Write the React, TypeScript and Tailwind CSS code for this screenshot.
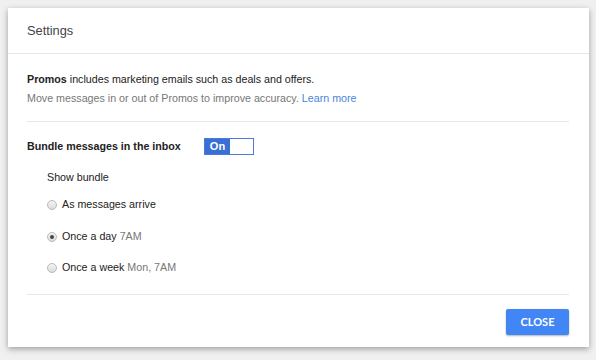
import React from "react";

function Radio({ checked }: { checked?: boolean }) {
  return (
    <span className="relative flex h-[10px] w-[10px] shrink-0 items-center justify-center rounded-full border border-[#b9b9b9] bg-gradient-to-b from-[#f4f4f4] to-[#dcdcdc]">
      {checked && <span className="h-[4px] w-[4px] rounded-full bg-[#444]" />}
    </span>
  );
}

export default function App() {
  return (
    <div className="h-[360px] w-[596px] bg-[#f0f0f0] pl-[8px] pt-[8px]" style={{ fontFamily: '"Liberation Sans", Arial, sans-serif' }}>
      <div className="flex h-[339px] w-[581px] flex-col bg-white shadow-[0_2px_6px_rgba(0,0,0,0.35)]">
        <div className="flex h-[46px] shrink-0 items-center border-b border-[#e6e6e6] px-[19px] pt-[1px] text-[12.8px] text-[#444]">
          Settings
        </div>
        <div className="flex flex-1 flex-col pl-[19px] pr-[20px]">
          <div className="mt-[16px] text-[10.7px] leading-[19px] text-[#222]">
            <div>
              <span className="font-bold">Promos</span> includes marketing emails such as deals and offers.
            </div>
            <div className="text-[#777]">
              Move messages in or out of Promos to improve accuracy.{" "}
              <span className="text-[#4a86d8]">Learn more</span>
            </div>
          </div>
          <div className="mt-[13px] h-px bg-[#e6e6e6]" />
          <div className="mt-[16px] flex h-[17px] items-center">
            <span className="w-[177px] text-[10.7px] font-bold text-[#222]">Bundle messages in the inbox</span>
            <span className="flex h-[17px] w-[50px] border border-[#4a7bd8]">
              <span className="flex w-[25px] items-center justify-center bg-[#3a6fd6] text-[11px] font-bold text-white">
                On
              </span>
              <span className="flex-1 bg-white" />
            </span>
          </div>
          <div className="pl-[20px] text-[10.7px] text-[#222]">
            <div className="mt-[16px] leading-[13px]">Show bundle</div>
            <div className="mt-[14px] flex h-[13px] items-center gap-[5px]">
              <Radio />
              <span>As messages arrive</span>
            </div>
            <div className="mt-[19px] flex h-[13px] items-center gap-[5px]">
              <Radio checked />
              <span>
                Once a day <span className="text-[#777]">7AM</span>
              </span>
            </div>
            <div className="mt-[18px] flex h-[13px] items-center gap-[5px]">
              <Radio />
              <span>
                Once a week <span className="text-[#777]">Mon, 7AM</span>
              </span>
            </div>
          </div>
          <div className="mt-[20px] h-px bg-[#e6e6e6]" />
          <div className="mt-[14px] flex justify-end">
            <button
              className="flex h-[26px] w-[63px] items-center justify-center rounded-[2px] bg-[#4285f4] text-[11px] font-bold text-white shadow-[0_1px_2px_rgba(0,0,0,0.3)]"
              style={{ fontFamily: 'Lato, "Open Sans", sans-serif' }}
            >
              CLOSE
            </button>
          </div>
        </div>
      </div>
    </div>
  );
}
